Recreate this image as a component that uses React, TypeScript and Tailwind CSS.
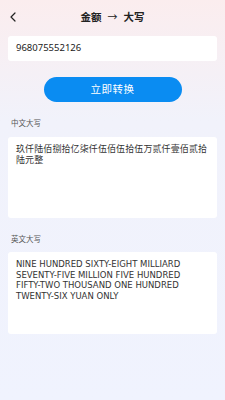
import React from "react";

export default function App() {
  return (
    <div
      className="w-[225px] h-[400px] overflow-hidden bg-gradient-to-b from-[#fbedee] via-[#f1f2fb] via-[30%] to-[#f0f3fe] text-[#222]"
      style={{ fontFamily: '"Noto Sans", "Noto Sans CJK SC", sans-serif' }}
    >
      <div className="relative h-[33px] flex items-center justify-center">
        <svg
          className="absolute left-[9px] top-[12px]"
          width="8"
          height="10"
          viewBox="0 0 8 10"
          fill="none"
        >
          <path d="M6 1L2 5L6 9" stroke="#222" strokeWidth="1.2" strokeLinecap="round" strokeLinejoin="round" />
        </svg>
        <div className="flex items-center gap-[6px] text-[10.5px] font-bold leading-none mt-[1px]">
          <span>金额</span>
          <span className="font-normal text-[10px]">→</span>
          <span>大写</span>
        </div>
      </div>

      <div className="mx-[8px] mt-[3px] h-[25px] bg-white rounded-[3px] flex items-center px-[8px] text-[9.5px] text-[#222]">
        968075552126
      </div>

      <div className="flex justify-center mt-[16px]">
        <div className="w-[138px] h-[25px] rounded-full bg-[#0a8cf2] text-white text-[10.5px] flex items-center justify-center tracking-[0.5px]">
          立即转换
        </div>
      </div>

      <div className="ml-[11px] mt-[18px] text-[7.5px] text-[#555] leading-none">中文大写</div>
      <div className="mx-[8px] mt-[9px] h-[81px] bg-white rounded-[3px] px-[8px] pt-[6px] text-[9px] leading-[11px] text-[#333] tracking-[0.1px]">
        玖仟陆佰捌拾亿柒仟伍佰伍拾伍万贰仟壹佰贰拾陆元整
      </div>

      <div className="ml-[11px] mt-[18px] text-[7.5px] text-[#555] leading-none">英文大写</div>
      <div
        className="mx-[8px] mt-[9px] h-[82px] bg-white rounded-[3px] pl-[8px] pr-[12px] pt-[7px] text-[8.5px] leading-[10.5px] text-[#333]"
        style={{ fontFamily: '"DejaVu Sans", "Noto Sans", sans-serif' }}
      >
        NINE HUNDRED SIXTY-EIGHT MILLIARD SEVENTY-FIVE MILLION FIVE HUNDRED FIFTY-TWO THOUSAND ONE HUNDRED TWENTY-SIX YUAN ONLY
      </div>
    </div>
  );
}
